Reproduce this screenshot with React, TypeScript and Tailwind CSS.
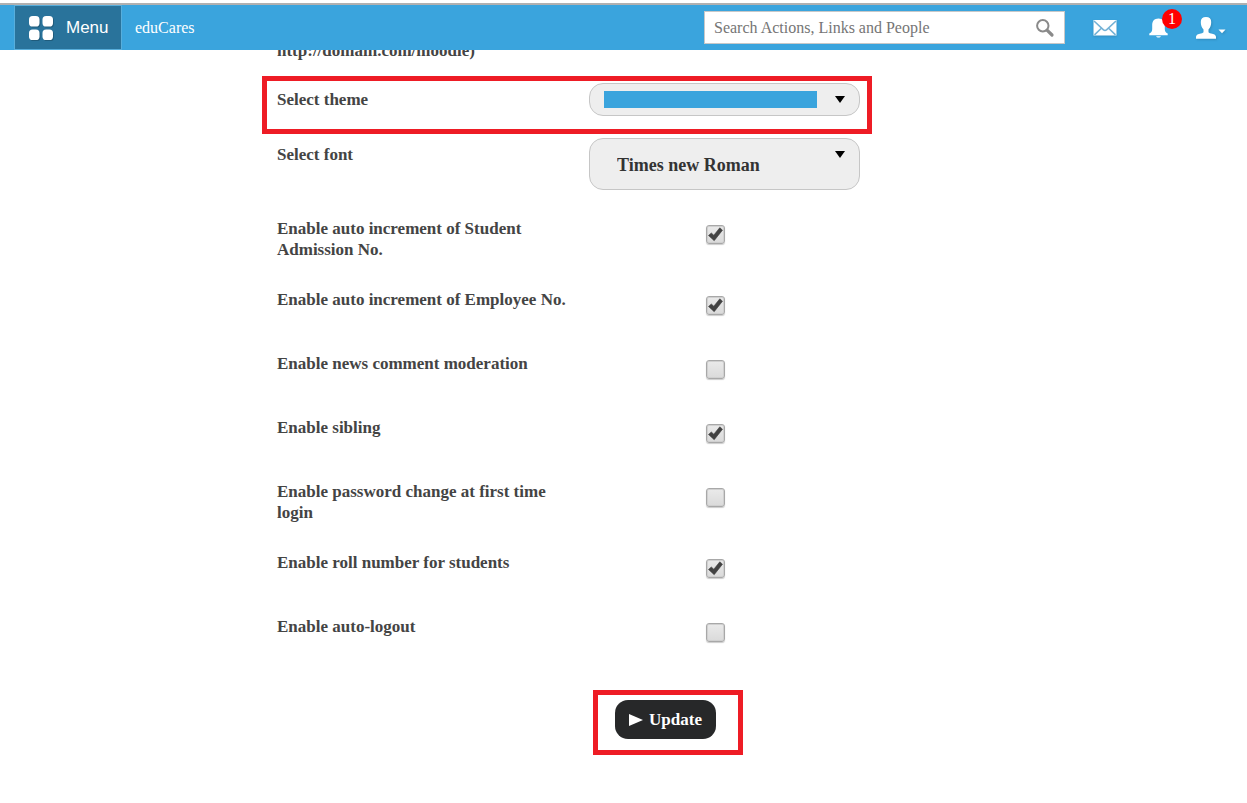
import React from "react";

type Setting = { id: string; label: string; checked: boolean };

const settings: Setting[] = [
  { id: "admission", label: "Enable auto increment of Student Admission No.", checked: true },
  { id: "employee", label: "Enable auto increment of Employee No.", checked: true },
  { id: "moderation", label: "Enable news comment moderation", checked: false },
  { id: "sibling", label: "Enable sibling", checked: true },
  { id: "password", label: "Enable password change at first time login", checked: false },
  { id: "roll", label: "Enable roll number for students", checked: true },
  { id: "logout", label: "Enable auto-logout", checked: false },
];

function GridIcon() {
  return (
    <svg className="h-[26px] w-[26px] drop-shadow-[1px_1px_0_rgba(0,0,0,0.2)]" viewBox="0 0 26 26" fill="#fff" aria-hidden="true">
      <rect x="1" y="1" width="10.5" height="10.5" rx="3.6" />
      <rect x="14.5" y="1" width="10.5" height="10.5" rx="3.6" />
      <rect x="1" y="14.5" width="10.5" height="10.5" rx="3.6" />
      <rect x="14.5" y="14.5" width="10.5" height="10.5" rx="3.6" />
    </svg>
  );
}

function SearchIcon() {
  return (
    <svg className="h-5 w-5" viewBox="0 0 20 20" fill="none" stroke="#8a8a8a" aria-hidden="true">
      <circle cx="7.8" cy="7.8" r="5.7" strokeWidth="2" />
      <path d="M12.3 12.3 17 17" strokeWidth="3.2" strokeLinecap="round" />
    </svg>
  );
}

function MailIcon() {
  return (
    <svg className="h-4 w-6 drop-shadow-[0_1px_1px_rgba(0,0,0,0.15)]" viewBox="0 0 24 16" aria-hidden="true">
      <rect x="0.5" y="0" width="23" height="15.5" fill="#fff" />
      <path d="M1 1 10.500 9.800Q12 11 13.500 9.800L23 1M1.500 14.800 8.600 8M22.500 14.800 15.400 8" fill="none" stroke="#74b2d6" strokeWidth="1.600" />
    </svg>
  );
}

function BellIcon() {
  return (
    <svg className="h-5 w-5" viewBox="0 0 20 20" fill="#fff" aria-hidden="true">
      <path d="M9.500.5C5.200.5 3.200 3.300 3.200 7v4c0 2.200-.8 3.400-2.900 4.600V17.300h18.400v-1.700C16.600 14.400 15.800 13.200 15.800 11V7C15.800 3.300 13.800.5 9.500.5Z" />
      <path d="M7 18.300h5c-.5.900-1.300 1.300-2.500 1.300s-2-.4-2.500-1.300Z" />
    </svg>
  );
}

function UserIcon() {
  return (
    <svg className="h-[22px] w-[30px] drop-shadow-[1px_1px_1px_rgba(0,0,0,0.15)]" viewBox="0 0 30 22" fill="#fff" aria-hidden="true">
      <path d="M10 0C6.500 0 4.800 1.800 4.800 5c0 3.300.9 5.600 2.700 7.500v2.300c0 1-.8 1.400-2.700 1.700C2 17 .300 17.700 0 19.800v2h20v-2c-.3-2.100-2-2.800-4.800-3.300-1.900-.3-2.700-.7-2.700-1.700v-2.300c1.800-1.900 2.700-4.200 2.700-7.500 0-3.200-1.700-5-5.200-5Z" />
      <path d="M22.500 12.500h7L26 16.200Z" />
    </svg>
  );
}

function DownArrow() {
  return (
    <svg className="pointer-events-none absolute top-[13px] right-[15px] h-[7px] w-[10px]" viewBox="0 0 10 7" aria-hidden="true">
      <path d="M0 0h10L5 7Z" fill="#000" />
    </svg>
  );
}

function CheckRow({ id, label, checked }: Setting) {
  return (
    <div className="grid min-h-[64px] grid-cols-[312px_271px] items-start">
      <label htmlFor={id} className="max-w-[300px] pb-[29px]">
        {label}
      </label>
      <div className="relative ml-[117px] mt-[7px] h-[19px] w-[19px]">
        <input
          id={id}
          type="checkbox"
          defaultChecked={checked}
          className="peer block h-[19px] w-[19px] appearance-none rounded-[3px] border border-[#a8a8a8] bg-linear-to-b from-[#eaeaea] to-[#dadada] shadow-[inset_0_0_0_1px_#d0d0d0,0_1px_1px_#ccc]"
        />
        <svg
          className="pointer-events-none absolute inset-0 hidden h-[19px] w-[19px] peer-checked:block"
          viewBox="0 0 19 19"
          aria-hidden="true"
        >
          <path d="M2.500 10.500 5.300 8 7.800 10.200 13.800 2.800 16.500 5.200 8.200 15.700Z" fill="#424242" stroke="#424242" strokeWidth="0.600" strokeLinejoin="round" />
        </svg>
      </div>
    </div>
  );
}

export default function App() {
  return (
    <div className="bg-white font-['Liberation_Serif','Times_New_Roman',serif] text-[#444]">
      <header className="sticky top-0 z-10 bg-white pt-[3px]">
        <div className="flex h-[47px] items-center border-t-2 border-[#b0b0b0] bg-[#3aa4dd] pl-[14px] pr-[21px] text-white">
          <button
            type="button"
            className="flex h-[45px] w-[108px] items-center gap-3 border border-[#58aedb] bg-[#29739b] pl-[13px] font-['Liberation_Sans',Arial,sans-serif] text-[17px] leading-5"
          >
            <GridIcon />
            Menu
          </button>
          <a href="#" className="ml-[13px] text-base leading-5">
            eduCares
          </a>
          <form className="ml-auto flex h-[33px] w-[361px] items-center border border-[#c8c8c8] bg-white pl-[9px] pr-[9px]">
            <input
              type="text"
              aria-label="Search"
              placeholder="Search Actions, Links and People"
              className="min-w-0 flex-1 text-base leading-5 text-[#444] outline-none placeholder:text-[#757575]"
            />
            <button type="button" aria-label="Search">
              <SearchIcon />
            </button>
          </form>
          <nav className="flex items-center">
            <a href="#" aria-label="Messages" className="ml-7">
              <MailIcon />
            </a>
            <a href="#" aria-label="Notifications" className="relative ml-8">
              <BellIcon />
              <span className="absolute -top-[9px] left-[13px] flex h-5 w-5 items-center justify-center rounded-full bg-[#f00] text-base leading-5">
                1
              </span>
            </a>
            <a href="#" aria-label="Account" className="ml-[27px]">
              <UserIcon />
            </a>
          </nav>
        </div>
      </header>

      <main className="-mt-[10px] pb-12 pl-[262px] text-[17px] font-bold leading-[21px]">
        <p className="pl-[15px]">http://domain.com/moodle)</p>

        <div className="mt-[15px] grid h-[58px] w-[610px] grid-cols-[312px_271px] items-start border-5 border-[#ee1c25] pl-[10px] pt-[2px]">
          <label htmlFor="theme" className="pt-[6px]">
            Select theme
          </label>
          <div className="relative">
            <select
              id="theme"
              className="block h-[33px] w-full appearance-none rounded-[14px] border border-[#c6c6c6] bg-[#eee] px-7"
            >
              <option aria-label="Blue" value="blue"></option>
            </select>
            <span className="pointer-events-none absolute top-2 left-[15px] h-[17px] w-[213px] bg-[#3aa4dd]" />
            <DownArrow />
          </div>
        </div>

        <div className="mt-1 grid grid-cols-[312px_271px] items-start pl-[15px]">
          <label htmlFor="font" className="pt-[6px]">
            Select font
          </label>
          <div className="relative">
            <select
              id="font"
              className="block h-[52px] w-full appearance-none rounded-[14px] border border-[#c6c6c6] bg-[#eee] pl-[27px] pr-8 pt-[2px] text-[18px] font-bold text-[#333]"
            >
              <option>Times new Roman</option>
            </select>
            <DownArrow />
          </div>
        </div>

        <div className="pl-[15px] pt-7">
          {settings.map((s) => (
            <CheckRow key={s.id} {...s} />
          ))}
        </div>

        <div className="ml-[331px] mt-[10px] flex h-[65px] w-[150px] items-start border-5 border-[#ee1c25] pl-[17px] pt-[5px]">
          <button
            type="button"
            className="flex h-[39px] w-[101px] items-center justify-center gap-[6px] rounded-[13px] bg-[#272829] text-white"
          >
            <svg className="h-3 w-[14px]" viewBox="0 0 14 12" aria-hidden="true">
              <path d="M0 0 14 6 0 12Z" fill="#fff" />
            </svg>
            Update
          </button>
        </div>
      </main>
    </div>
  );
}
